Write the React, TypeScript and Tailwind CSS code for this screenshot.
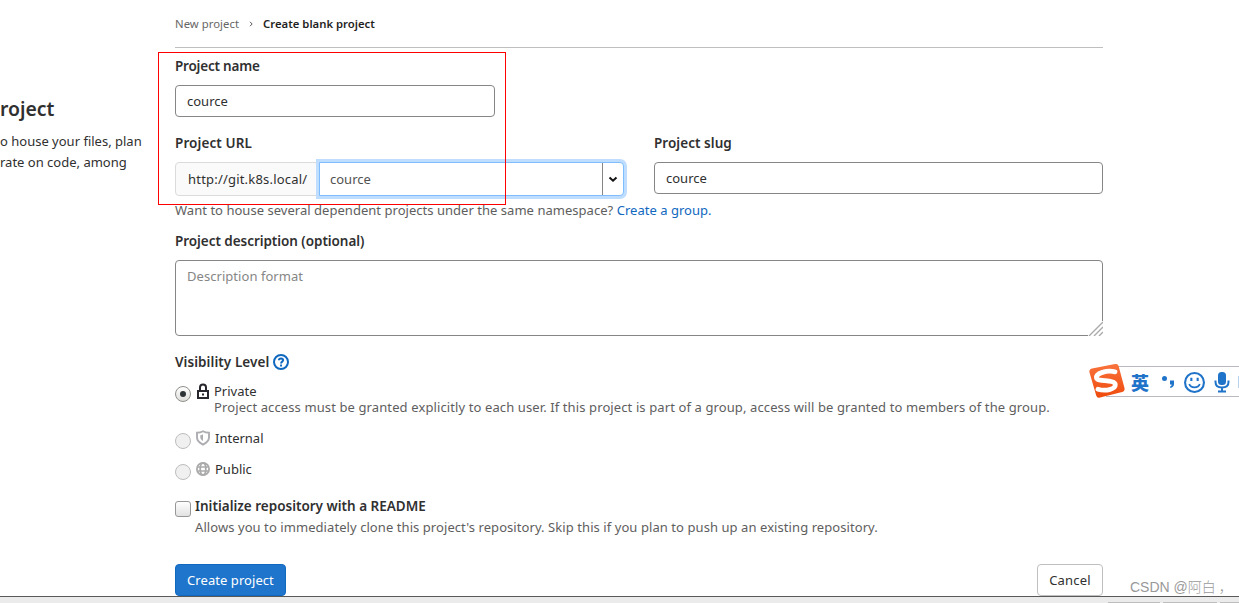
import type { ReactNode } from "react"

type LabelProps = {
    children: ReactNode
    className?: string
}

const Label = ({ children, className = "" }: LabelProps) => (
    <div className={`h-5 whitespace-nowrap text-[13.5px] leading-[21px] font-semibold text-[#303030] ${className}`}>{children}</div>
)

type RadioProps = {
    checked?: boolean
}

const Radio = ({ checked }: RadioProps) => (
    <span
        className={`flex size-4 shrink-0 items-center justify-center rounded-full border ${checked ? "border-[#8f8f8b] bg-linear-to-b from-white to-[#dededb]" : "border-[#bdbdbd] bg-[#f0f0f0]"}`}
    >
        {checked ? <span className="size-1.5 rounded-full bg-[#2e3436]" /> : null}
    </span>
)

const LockIcon = () => (
    <svg width="14" height="17" viewBox="0 0 14 17" fill="none" stroke="#28272d" strokeWidth="2">
        <path d="M2 8h10v7H2z" />
        <path d="M4 8V4.500a3 3 0 0 1 6 0V8" />
        <path d="M6 11.500h2" />
    </svg>
)

const ShieldIcon = () => (
    <svg width="14" height="16" viewBox="0 0 14 16">
        <path d="M7 1.300c2 1.200 4 1.500 6 1.500v4.700c0 3-2.500 5.300-6 7.200-3.500-1.900-6-4.200-6-7.200V2.800c2 0 4-.3 6-1.500z" fill="none" stroke="#aeaeb2" strokeWidth="1.900" />
        <path d="M7 4.200v6.800C5.400 10 4.300 8.800 4.300 7.200V5.200c1 0 1.900-.3 2.700-1z" fill="#aeaeb2" />
    </svg>
)

const GlobeIcon = () => (
    <svg width="14" height="14" viewBox="0 0 14 14" fill="none" stroke="#aaaaaa" strokeWidth="1.800">
        <circle cx="7" cy="7" r="6.100" />
        <ellipse cx="7" cy="7" rx="2.800" ry="6" />
        <path d="M1 5h12M1 9h12" strokeWidth="1.500" />
    </svg>
)

const HelpIcon = () => (
    <svg width="16" height="16" viewBox="0 0 16 16" fill="none" stroke="#1068bf" strokeWidth="2">
        <circle cx="8" cy="8" r="7" />
        <path d="M5.900 6.200C6 4.800 7 4.400 8 4.400c1.200 0 2.100.7 2.100 1.800 0 1.400-2 1.500-2 3.200" />
        <path d="M7.100 11.500h1.900" />
    </svg>
)

const InputMethodBar = () => (
    <div className="absolute top-[366px] left-[1106px] flex h-[31px] w-[133px] items-center border-y border-[#b9b9c2] bg-white text-[#1f73c9]">
        <svg className="absolute -top-1 -left-[18px]" width="38" height="38" viewBox="0 0 38 38">
            <defs>
                <linearGradient id="logoFill" x1="0" y1="0" x2="0" y2="1">
                    <stop offset="0" stopColor="#f9733d" />
                    <stop offset="1" stopColor="#ef4a0c" />
                </linearGradient>
            </defs>
            <path d="M4 5.500 27 1q3-.6 3.600 2L36.500 25q.6 3-2.300 4L12 34.500q-3 .8-3.800-2L1.500 9.500q-.8-3.200 2.500-4z" fill="url(#logoFill)" />
            <path d="M27 8.800C19 7 7.500 10 8.500 15c.8 4 18.500 1.300 18.800 6.500.3 5-10 7-17.300 4.700" fill="none" stroke="#fff" strokeWidth="4.800" strokeLinecap="round" />
        </svg>
        <span className="mt-px ml-6 w-5 text-center font-['Noto_Sans_CJK_SC',sans-serif] text-lg leading-7 font-black">英</span>
        <svg className="mt-px ml-[11px] shrink-0" width="14" height="18" viewBox="0 0 14 18" fill="currentColor">
            <circle cx="3.500" cy="5.500" r="2.500" />
            <path d="M9 7.500h4v3.500c0 2-1.200 3.500-3.800 4v-1.600c1-.4 1.500-1 1.500-1.900H9z" />
        </svg>
        <svg className="mt-px ml-[9px] shrink-0" width="21" height="21" viewBox="0 0 20 20" fill="none" stroke="currentColor" strokeWidth="2">
            <circle cx="10" cy="10" r="9" />
            <path d="M7 5.500v3M13 5.500v3" />
            <path d="M5 11.500c1.500 4.300 8.500 4.300 10 0" strokeWidth="1.700" />
        </svg>
        <svg className="mt-0.5 ml-[9px] shrink-0" width="16" height="21" viewBox="0 0 16 21" fill="none" stroke="currentColor" strokeWidth="2">
            <rect x="4" y="0" width="8" height="13" rx="3.500" fill="currentColor" stroke="none" />
            <path d="M1.500 8.500v1.500c0 3.500 2.500 5.500 6.500 5.500s6.500-2 6.500-5.500V8.500M8 15v5M4 19.500h8" />
        </svg>
        <span className="ml-auto h-3 w-px bg-[#b8d2ee]" />
    </div>
)

const App = () => {
    return (
        <div className="relative flex h-[603px] w-[1239px] flex-col overflow-hidden bg-white font-['Noto_Sans',sans-serif] text-[13px] text-[#303030]">
            <div className="flex h-[596px] shrink-0">
                <aside className="w-[175px] shrink-0 pt-[95px] whitespace-nowrap">
                    <h4 className="text-[19.4px] leading-7 font-semibold">roject</h4>
                    <p className="mt-2 leading-[21px]">
                        o house your files, plan
                        <br />
                        rate on code, among
                    </p>
                </aside>

                <main className="w-[928px] shrink-0">
                    <nav className="flex h-12 items-center border-b border-[#bfbfbf] pt-px text-[11.3px]">
                        <span className="tracking-[0.05px] text-[#666666]">New project</span>
                        <svg className="mx-[9px]" width="6" height="6" viewBox="0 0 6 6" fill="none" stroke="#555" strokeWidth="1">
                            <path d="m2 .8 2.200 2.200L2 5.200" />
                        </svg>
                        <span className="font-semibold text-[#1f1f1f]">Create blank project</span>
                    </nav>

                    <Label className="mt-2 tracking-[-0.2px]">Project name</Label>
                    <div className="mt-[9px] flex h-8 w-80 items-center rounded border border-[#868686] px-[11px] pt-px">cource</div>

                    <div className="mt-4 flex">
                        <div className="w-[479px]">
                            <Label className="tracking-[0.1px]">Project URL</Label>
                            <div className="mt-[9px] flex h-[34px]">
                                <div className="flex w-36 items-center rounded-l border border-[#dbdbdb] bg-[#fafafa] pt-px pl-3 tracking-[0.2px]">http://git.k8s.local/</div>
                                <div className="relative flex w-[305px] rounded-r border border-[#80bdff] bg-white shadow-[0_0_0_3px_#bfdeff]">
                                    <div className="flex flex-1 items-center pt-px pl-2.5 text-[#525252]">cource</div>
                                    <div className="flex w-[21px] items-center justify-center border-l border-[#868686]">
                                        <svg width="10" height="7" viewBox="0 0 10 7" fill="none" stroke="#111" strokeWidth="2">
                                            <path d="m1.500 1.500 3.500 3.200 3.500-3.200" />
                                        </svg>
                                    </div>
                                </div>
                            </div>
                        </div>
                        <div className="w-[449px]">
                            <Label className="tracking-[0.05px]">Project slug</Label>
                            <div className="mt-[9px] flex h-8 items-center rounded border border-[#868686] px-[11px] pt-px">cource</div>
                        </div>
                    </div>
                    <p className="mt-1 h-5 leading-[21px] tracking-[0.03px] whitespace-nowrap text-[#5e5e5e]">
                        Want to house several dependent projects under the same namespace? <span className="text-[#1068bf]">Create a group.</span>
                    </p>

                    <Label className="mt-[11px] tracking-[-0.05px]">Project description (optional)</Label>
                    <div className="relative mt-[9px] h-[76px] rounded border border-[#868686] px-[11px] pt-[5px] leading-[21px] tracking-[0.05px] text-[#868686]">
                        Description format
                        <svg className="absolute -right-px -bottom-px bg-white" width="15" height="15" viewBox="0 0 15 15" stroke="#aaa" strokeWidth="1.400">
                            <path d="M1 15 15 1M6 15l9-9M11 15l4-4" />
                        </svg>
                    </div>

                    <div className="mt-4 flex items-center">
                        <Label className="tracking-[0.07px]">Visibility Level</Label>
                        <span className="ml-1"><HelpIcon /></span>
                    </div>

                    <div className="mt-2.5 flex h-[38px]">
                        <div className="pt-[4px]"><Radio checked /></div>
                        <div className="ml-[5px] w-[18px] pt-px"><LockIcon /></div>
                        <div className="pt-px leading-4 whitespace-nowrap">
                            <div>Private</div>
                            <div className="tracking-[0.11px] text-[#5e5e5e]">Project access must be granted explicitly to each user. If this project is part of a group, access will be granted to members of the group.</div>
                        </div>
                    </div>
                    <div className="mt-[9px] flex h-[22px]">
                        <div className="pt-[4px]"><Radio /></div>
                        <div className="ml-[5px] w-[18px] pt-px"><ShieldIcon /></div>
                        <div className="pt-px pl-px leading-4">Internal</div>
                    </div>
                    <div className="mt-[9px] flex h-[22px]">
                        <div className="pt-[4px]"><Radio /></div>
                        <div className="ml-[5px] w-[18px] pt-0.5"><GlobeIcon /></div>
                        <div className="pt-px pl-px leading-4">Public</div>
                    </div>

                    <div className="mt-[14px] flex">
                        <span className="mt-[5px] size-4 rounded-[3px] border border-[#979797] bg-linear-to-b from-white to-[#e2e2e2]" />
                        <div className="ml-1 leading-5">
                            <Label>Initialize repository with a README</Label>
                            <div className="mt-px tracking-[0.07px] whitespace-nowrap text-[#5e5e5e]">Allows you to immediately clone this project's repository. Skip this if you plan to push up an existing repository.</div>
                        </div>
                    </div>

                    <div className="mt-[27px] flex h-8 justify-between">
                        <button className="w-[111px] rounded border border-[#1068bf] bg-[#1f75cb] pt-px tracking-[0.06px] whitespace-nowrap text-white">Create project</button>
                        <button className="w-[66px] rounded border border-[#bfbfbf] bg-white pt-px tracking-[0.2px]">Cancel</button>
                    </div>
                </main>
            </div>

            <div className="flex h-[7px] shrink-0 items-end justify-end gap-[3px] border-t border-[#595959] bg-[#ebebeb]">
                <span className="h-px w-[52px] bg-[#bdbdbd]" />
                <span className="h-px w-[54px] bg-[#bdbdbd]" />
                <span className="h-px w-[19px] bg-[#bdbdbd]" />
            </div>

            <div className="absolute top-[52px] left-[158px] h-[153px] w-[348px] border border-[#ff0000]" />
            <InputMethodBar />
            <div className="absolute top-[577px] left-[1130px] font-['Liberation_Sans','Noto_Sans_CJK_SC',sans-serif] text-sm leading-5 font-light whitespace-nowrap text-[#999999]">
                CSDN @阿白<span className="ml-[3px]">，</span>
            </div>
        </div>
    )
}

export default App
